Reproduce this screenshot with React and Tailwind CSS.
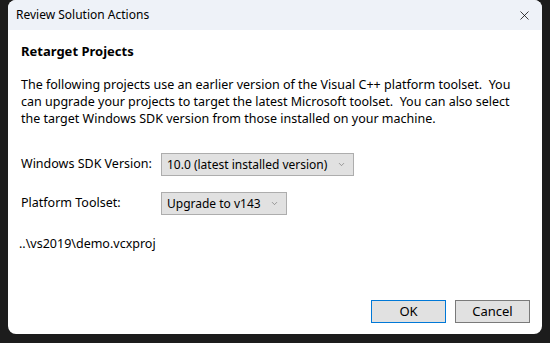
import { X, ChevronDown } from "lucide-react";

function Select({ value, width }) {
  return (
    <div
      className={`flex h-[23px] ${width} shrink-0 items-center justify-between whitespace-nowrap border border-[#adadad] bg-[#e1e1e1] pl-[5px] pr-[7px] text-[12px] text-black`}
    >
      <span>{value}</span>
      <ChevronDown size={9} strokeWidth={1.5} className="text-[#606060]" />
    </div>
  );
}

function Button({ children, primary }) {
  return (
    <button
      className={`h-[23px] w-[75px] border bg-[#e1e1e1] text-[13px] text-black ${
        primary ? "border-[#0078d7]" : "border-[#7a7a7a]"
      }`}
    >
      {children}
    </button>
  );
}

export default function App() {
  return (
    <div
      className="h-[343px] w-[550px] bg-[#1c1c1c] pl-[8px]"
      style={{ fontFamily: '"Noto Sans", "Open Sans", sans-serif' }}
    >
      <div className="flex h-[334px] w-[534px] flex-col overflow-hidden rounded-[8px] bg-white">
        {/* title bar */}
        <div className="flex h-[30px] shrink-0 items-center justify-between bg-[#eef2f8] pl-[8px] pr-[10px]">
          <span className="text-[12px] text-black">Review Solution Actions</span>
          <X size={15} strokeWidth={1.2} className="text-black" />
        </div>

        <div className="flex flex-1 flex-col pl-[13px] pr-[12px]">
          <h1 className="mt-[12px] text-[13px] font-bold leading-[18px] text-black">
            Retarget Projects
          </h1>
          <p className="mt-[16px] text-[12.5px] leading-[17px] text-black">
            The following projects use an earlier version of the Visual C++ platform toolset.&nbsp; You
            can upgrade your projects to target the latest Microsoft toolset.&nbsp; You can also select
            the target Windows SDK version from those installed on your machine.
          </p>

          <div className="mt-[26px] flex items-center">
            <span className="w-[140px] text-[12.5px] text-black">Windows SDK Version:</span>
            <Select value="10.0 (latest installed version)" width="w-[193px]" />
          </div>
          <div className="mt-[16px] flex items-center">
            <span className="w-[140px] text-[12.5px] text-black">Platform Toolset:</span>
            <Select value="Upgrade to v143" width="w-[126px]" />
          </div>

          <div className="mt-[20px] -ml-[2px] text-[12.5px] text-black">..\vs2019\demo.vcxproj</div>

          <div className="mt-auto mb-[11px] flex justify-end gap-[9px]">
            <Button primary>OK</Button>
            <Button>Cancel</Button>
          </div>
        </div>
      </div>
    </div>
  );
}
